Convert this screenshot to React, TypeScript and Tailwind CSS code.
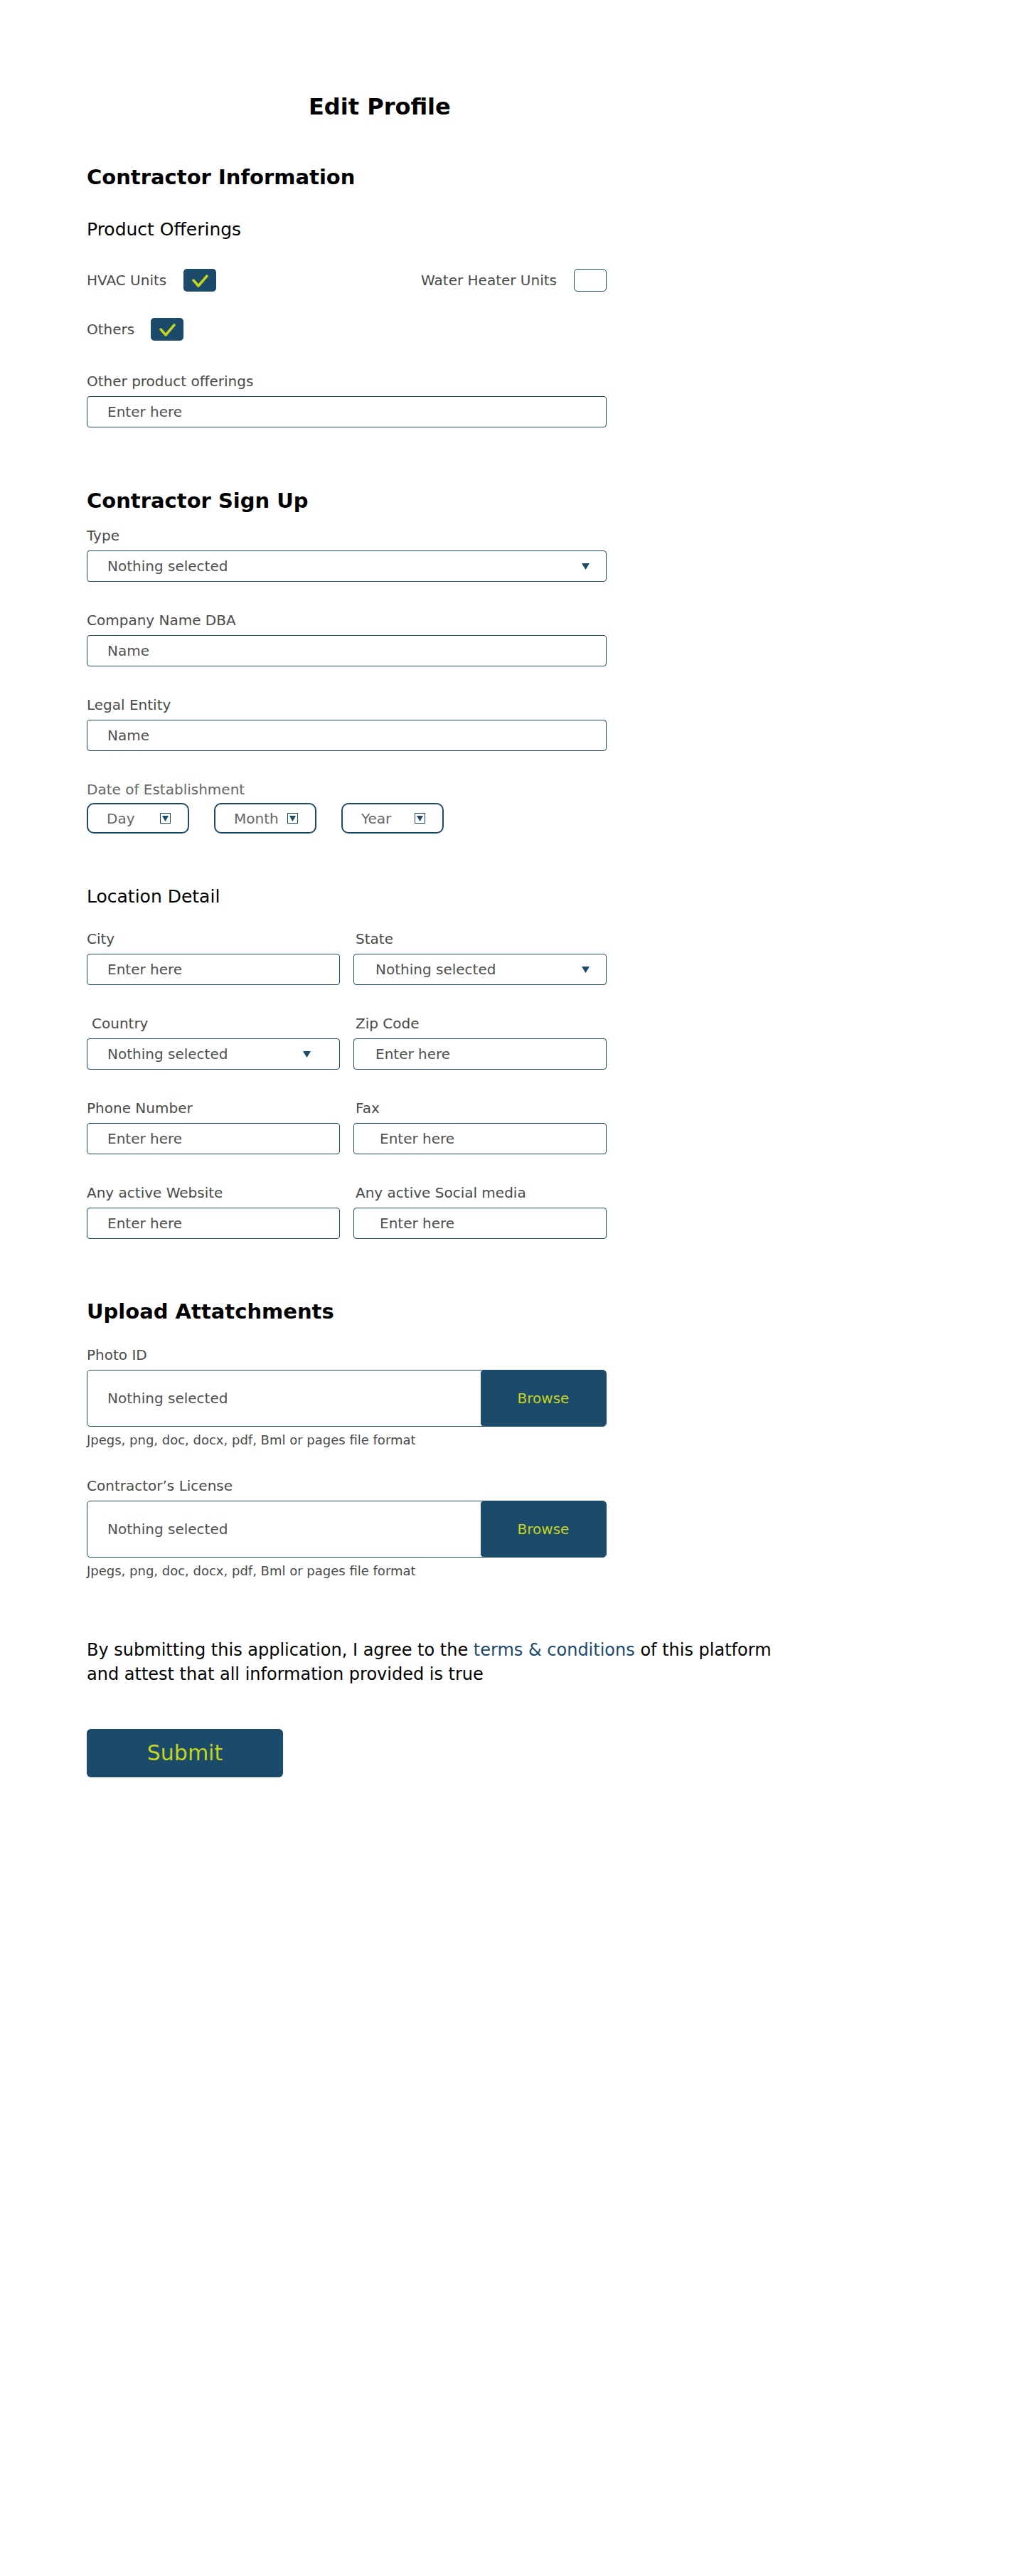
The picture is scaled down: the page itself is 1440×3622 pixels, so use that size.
import React from 'react';

const BLUE = '#1b4a6a';

const Check = () => (
    <svg width="46" height="32" viewBox="0 0 46 32" className="block">
        <rect x="0" y="0" width="46" height="32" rx="5" fill={BLUE} />
        <polyline points="14,16 21,24 33,10" fill="none" stroke="#c5d41c" strokeWidth="3.5" strokeLinecap="round" strokeLinejoin="round" />
    </svg>
);

const Empty = () => <div className="w-[46px] h-[32px] rounded-[5px] border border-[#1b4a6a] bg-white" />;

const Arrow = () => (
    <svg width="11" height="9" viewBox="0 0 11 9">
        <polygon points="0,0 11,0 5.5,9" fill={BLUE} />
    </svg>
);

const BoxArrow = () => (
    <div className="w-[15px] h-[15px] border-[1.5px] border-[#1b4a6a] flex items-center justify-center">
        <svg width="9" height="8" viewBox="0 0 9 8">
            <polygon points="0,0 9,0 4.5,8" fill={BLUE} />
        </svg>
    </div>
);

interface FieldProps {
    label: string;
    value: string;
    select?: boolean;
    labelClass?: string;
    valueClass?: string;
    className?: string;
}

const Field = ({ label, value, select, labelClass = '', valueClass = 'pl-[28px]', className = '' }: FieldProps) => (
    <div className={className}>
        <div className={`text-[20px] leading-[24px] text-[#4a4a4a] ${labelClass}`}>{label}</div>
        <div className={`mt-[9px] h-[44px] border border-[#1b4a6a] rounded-[4px] flex items-center justify-between pr-[23px] text-[20px] text-[#505050] ${valueClass}`}>
            <span>{value}</span>
            {select && <Arrow />}
        </div>
    </div>
);

const DateBox = ({ text }: { text: string }) => (
    <div className="w-[144px] h-[43px] border-2 border-[#1b4a6a] rounded-[10px] flex items-center pl-[26px] text-[20px] text-[#666]">
        <span className="w-[75px]">{text}</span>
        <BoxArrow />
    </div>
);

const FileField = ({ label, className = '' }: { label: string; className?: string }) => (
    <div className={className}>
        <div className="text-[20px] leading-[24px] text-[#4a4a4a]">{label}</div>
        <div className="mt-[9px] h-[80px] border border-[#1b4a6a] rounded-[5px] flex overflow-hidden">
            <div className="flex-1 flex items-center pl-[28px] text-[20px] text-[#505050]">Nothing selected</div>
            <button type="button" className="w-[176px] bg-[#1b4a6a] text-[#c5d41c] text-[20px] rounded-l-[4px]">
                Browse
            </button>
        </div>
        <div className="mt-[8px] text-[18px] leading-[22px] text-[#4a4a4a]">Jpegs, png, doc, docx, pdf, Bml or pages file format</div>
    </div>
);

const App = () => (
    <div className="min-h-screen bg-white font-['DejaVu_Sans',sans-serif] text-black">
        <div className="w-[853px] pl-[122px] pt-[130px] pb-[200px]">
            <h1 className="pl-[312px] text-[32px] leading-[40px] font-bold whitespace-nowrap">Edit Profile</h1>

            <h2 className="mt-[61px] text-[29px] leading-[36px] font-bold">Contractor Information</h2>
            <h3 className="mt-[41px] text-[25px] leading-[30px]">Product Offerings</h3>

            <div className="mt-[40px] h-[32px] flex items-center justify-between">
                <div className="flex items-center gap-[24px]">
                    <span className="text-[20px] text-[#4a4a4a]">HVAC Units</span>
                    <Check />
                </div>
                <div className="flex items-center gap-[24px]">
                    <span className="text-[20px] text-[#4a4a4a]">Water Heater Units</span>
                    <Empty />
                </div>
            </div>
            <div className="mt-[37px] h-[32px] flex items-center gap-[23px]">
                <span className="text-[20px] text-[#4a4a4a]">Others</span>
                <Check />
            </div>

            <Field className="mt-[45px]" label="Other product offerings" value="Enter here" />

            <h2 className="mt-[85px] text-[29px] leading-[36px] font-bold">Contractor Sign Up</h2>
            <Field className="mt-[19px]" label="Type" value="Nothing selected" select />
            <Field className="mt-[42px]" label="Company Name DBA" value="Name" />
            <Field className="mt-[42px]" label="Legal Entity" value="Name" />

            <div className="mt-[42px]">
                <div className="text-[20px] leading-[24px] text-[#666]">Date of Establishment</div>
                <div className="mt-[7px] flex gap-[35px]">
                    <DateBox text="Day" />
                    <DateBox text="Month" />
                    <DateBox text="Year" />
                </div>
            </div>

            <h3 className="mt-[74px] text-[25px] leading-[30px]">Location Detail</h3>
            <div className="mt-[32px] grid grid-cols-2 gap-x-[19px] gap-y-[42px]">
                <Field label="City" value="Enter here" />
                <Field label="State" value="Nothing selected" select labelClass="pl-[3px]" valueClass="pl-[30px]" />
                <Field label="Country" value="Nothing selected" select labelClass="pl-[7px]" valueClass="pl-[28px] !pr-[40px]" />
                <Field label="Zip Code" value="Enter here" labelClass="pl-[3px]" valueClass="pl-[30px]" />
                <Field label="Phone Number" value="Enter here" />
                <Field label="Fax" value="Enter here" labelClass="pl-[3px]" valueClass="pl-[36px]" />
                <Field label="Any active Website" value="Enter here" />
                <Field label="Any active Social media" value="Enter here" labelClass="pl-[3px]" valueClass="pl-[36px]" />
            </div>

            <h2 className="mt-[84px] text-[29px] leading-[36px] font-bold">Upload Attatchments</h2>
            <FileField className="mt-[31px]" label="Photo ID" />
            <FileField className="mt-[41px]" label="Contractor’s License" />

            <p className="mt-[83px] w-[1100px] text-[24px] leading-[34px] whitespace-nowrap">
                By submitting this application, I agree to the <span className="text-[#1b4a6a]">terms &amp; conditions</span> of this platform
                <br />
                and attest that all information provided is true
            </p>

            <button type="button" className="mt-[60px] w-[276px] h-[68px] rounded-[6px] bg-[#1b4a6a] text-[#c5d41c] text-[30px] leading-none">
                Submit
            </button>
        </div>
    </div>
);

export default App;
